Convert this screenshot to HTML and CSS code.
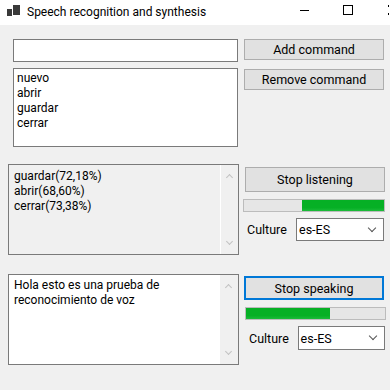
FILE: index.html
```html
<!DOCTYPE html>
<html>
<head>
<meta charset="utf-8">
<link rel="stylesheet" href="styles.css">
</head>
<body>
<div class="window">
  <div class="titlebar">
    <svg class="appicon" width="14" height="14" viewBox="0 0 14 14">
      <rect x="6" y="0" width="7" height="10" fill="#3a3a3a"/>
      <rect x="0" y="4" width="5" height="7" fill="#3a3a3a"/>
    </svg>
    <span class="title">Speech recognition and synthesis</span>
    <div class="controls">
      <span class="ctl min"></span>
      <span class="ctl max"></span>
      <span class="ctl close"></span>
    </div>
  </div>
  <div class="content">
    <div class="row row1">
      <div class="left">
        <div class="textbox"></div>
        <div class="listbox">
          <div>nuevo</div>
          <div>abrir</div>
          <div>guardar</div>
          <div>cerrar</div>
        </div>
      </div>
      <div class="right">
        <div class="btn btn-small">Add command</div>
        <div class="btn btn-small btn-remove">Remove command</div>
      </div>
    </div>

    <div class="row row2">
      <div class="memo memo-gray">
        <div class="memo-text">
          <div>guardar(72,18%)</div>
          <div>abrir(68,60%)</div>
          <div>cerrar(73,38%)</div>
        </div>
        <div class="scroll">
          <span class="arrow up"></span>
          <span class="arrow down"></span>
        </div>
      </div>
      <div class="panel">
        <div class="btn btn-big listen">Stop listening</div>
        <div class="progress p-listen"><div class="fill" style="margin-left:58px;width:82px"></div></div>
        <div class="culture">
          <span class="label">Culture</span>
          <div class="combo"><span>es-ES</span><span class="chev"></span></div>
        </div>
      </div>
    </div>

    <div class="row row3">
      <div class="memo memo-white">
        <div class="memo-text">Hola esto es una prueba de reconocimiento de voz</div>
        <div class="scroll">
          <span class="arrow up"></span>
          <span class="arrow down"></span>
        </div>
      </div>
      <div class="panel panel3">
        <div class="btn btn-big speak">Stop speaking</div>
        <div class="progress p-speak"><div class="fill" style="width:84px"></div></div>
        <div class="culture culture3">
          <span class="label">Culture</span>
          <div class="combo"><span>es-ES</span><span class="chev"></span></div>
        </div>
      </div>
    </div>
  </div>
</div>
</body>
</html>
```

FILE: styles.css
```css
* { box-sizing: border-box; }
html, body { margin: 0; padding: 0; }
body {
  width: 390px;
  height: 390px;
  overflow: hidden;
  background: #f0f0f0;
  font-family: Roboto, "Noto Sans", sans-serif;
  font-size: 12px;
  color: #000;
}
.window { width: 390px; height: 390px; }

.titlebar {
  height: 25px;
  background: #fff;
  display: flex;
  align-items: center;
  position: relative;
}
.appicon { margin-left: 7px; margin-top: -2px; }
.title { margin-left: 6px; font-size: 12px; line-height: 16px; margin-top: -2px; }
.controls { position: absolute; left: 0; top: 0; width: 390px; height: 25px; }
.ctl { position: absolute; display: block; }
.min { left: 300px; top: 10px; width: 9px; height: 1px; background: #000; }
.max { left: 343px; top: 5px; width: 10px; height: 10px; border: 1px solid #000; }
.close { left: 388px; top: 5px; width: 2px; height: 10px; }
.close::before {
  content: ""; position: absolute; left: 0; top: 0; width: 1px; height: 2px; background: #000;
}
.close::after {
  content: ""; position: absolute; left: 0; top: 8px; width: 1px; height: 2px; background: #000;
}

.content { display: flex; flex-direction: column; }
.row { display: flex; }
.row1 { margin-top: 14px; margin-left: 13px; }
.left { width: 225px; display: flex; flex-direction: column; gap: 6px; }
.textbox { height: 23px; background: #fff; border: 1px solid #7a7a7a; }
.listbox {
  height: 79px; background: #fff; border: 1px solid #7a7a7a;
  padding: 2px 3px; line-height: 15px;
}
.right { margin-left: 6px; width: 140px; display: flex; flex-direction: column; }
.btn {
  background: #e1e1e1; border: 1px solid #adadad;
  display: flex; align-items: center; justify-content: center;
  line-height: 15px; font-size: 12.5px;
}
.btn-small { height: 21px; }
.btn-remove { margin-top: 9px; }

.row2 { margin-top: 17px; margin-left: 8px; }
.row3 { margin-top: 19px; margin-left: 8px; }
.memo {
  width: 231px; height: 91px; border: 1px solid #7a7a7a; display: flex;
}
.memo-gray { background: #f0f0f0; }
.memo-white { background: #fff; }
.memo-text { flex: 1; padding: 4px 5px; line-height: 15px; }
.memo-white .memo-text { padding: 3px 5px 3px 5px; line-height: 15px; }
.scroll {
  width: 18px; background: #f0f0f0; position: relative;
}
.memo-gray .scroll { border-left: 1px solid #fff; }
.arrow {
  position: absolute; left: 6px; width: 5px; height: 5px;
  border-left: 1px solid #c2c2c2; border-top: 1px solid #c2c2c2;
}
.arrow.up { top: 10px; transform: rotate(45deg); }
.arrow.down { bottom: 10px; transform: rotate(225deg); }

.panel { margin-left: 4px; width: 142px; display: flex; flex-direction: column; }
.btn-big { margin-left: 2px; width: 140px; }
.listen { margin-top: 3px; height: 25px; }
.speak { margin-top: 2px; margin-left: 1px; height: 24px; border: 2px solid #0078d7; }
.progress {
  height: 13px; background: #e6e6e6; border: 1px solid #bcbcbc; display: flex;
}
.p-listen { margin-top: 7px; width: 142px; }
.p-speak { margin-top: 7px; margin-left: 2px; width: 141px; }
.fill {
  height: 11px;
  background: linear-gradient(#06b025 0%, #06b025 70%, #1cbb3a 100%);
}
.culture { display: flex; align-items: center; margin-top: 6px; font-size: 12.5px; }
.culture3 { margin-top: 6px; }
.label { margin-left: 4px; width: 49px; }
.combo {
  width: 88px; height: 23px; background: #fff; border: 1px solid #7a7a7a;
  display: flex; align-items: center; justify-content: space-between;
  padding: 0 8px 0 2px;
}
.panel3 .label { margin-left: 6px; }
.panel3 .combo { width: 88px; height: 24px; }
.chev {
  width: 6px; height: 6px;
  border-right: 1px solid #555; border-bottom: 1px solid #555;
  transform: rotate(45deg); margin-top: -4px;
}
```
